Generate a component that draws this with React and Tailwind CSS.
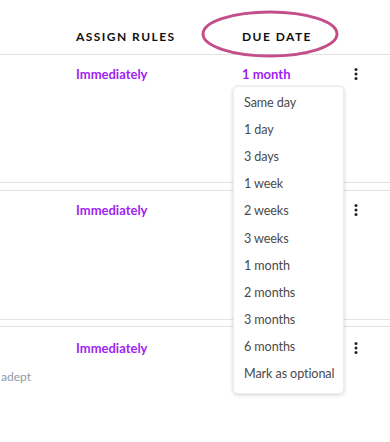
import React from "react";

const OPTIONS = [
  "Same day",
  "1 day",
  "3 days",
  "1 week",
  "2 weeks",
  "3 weeks",
  "1 month",
  "2 months",
  "3 months",
  "6 months",
  "Mark as optional",
];

function Kebab() {
  return (
    <svg width="4" height="12" viewBox="0 0 4 12" className="block">
      <circle cx="2" cy="1.6" r="1.5" fill="#222" />
      <circle cx="2" cy="6" r="1.5" fill="#222" />
      <circle cx="2" cy="10.4" r="1.5" fill="#222" />
    </svg>
  );
}

function Row({ due, pt, className = "", extra }) {
  return (
    <div className={`flex ${className}`} style={{ paddingTop: pt }}>
      <div className="w-[76px] shrink-0">{extra}</div>
      <div className="w-[166px] shrink-0 text-[13px] leading-4 font-bold text-[#a01ff0]">
        Immediately
      </div>
      <div className="w-[112px] shrink-0 text-[13px] leading-4 font-bold text-[#a01ff0]">
        {due}
      </div>
      <div className="pt-[2px]">
        <Kebab />
      </div>
    </div>
  );
}

export default function App() {
  return (
    <div
      className="relative w-[390px] h-[442px] overflow-hidden bg-white"
      style={{ fontFamily: "Lato, 'Open Sans', sans-serif" }}
    >
      {/* header */}
      <div className="flex items-center h-[55px] pt-[19px] border-b border-[#e2e2e2] text-[12px] font-bold tracking-[1.45px] text-[#111]">
        <div className="w-[76px] shrink-0" />
        <div className="w-[166px] shrink-0">ASSIGN RULES</div>
        <div className="relative">
          DUE DATE
          <svg
            className="absolute left-[-41px] top-[-18px]"
            width="140"
            height="50"
            viewBox="0 0 140 50"
          >
            <ellipse cx="69" cy="24" rx="67" ry="22" fill="none" stroke="#c24f8a" strokeWidth="3" />
          </svg>
        </div>
      </div>

      <Row due="1 month" pt="11px" className="h-[128px] border-b border-[#e2e2e2]" />
      <div className="h-[7px]" />
      <Row due="" pt="11px" className="h-[130px] border-y border-[#e2e2e2]" />
      <div className="h-[6px]" />
      <Row
        due=""
        pt="13px"
        className="h-[130px] border-t border-[#e2e2e2]"
        extra={<div className="mt-[29px] pl-px text-[12px] leading-4 text-[#8e9aa6]">adept</div>}
      />

      {/* dropdown */}
      <div className="absolute left-[233px] top-[86px] w-[111px] pt-[3px] pb-[5px] bg-white rounded-[5px] border border-[#ececec] shadow-[0_1px_4px_rgba(0,0,0,0.18)]">
        {OPTIONS.map((o) => (
          <div key={o} className="h-[27.1px] flex items-center pl-[10px] text-[12.6px] tracking-[-0.1px] text-[#4a4a4a] whitespace-nowrap">
            {o}
          </div>
        ))}
      </div>
    </div>
  );
}
